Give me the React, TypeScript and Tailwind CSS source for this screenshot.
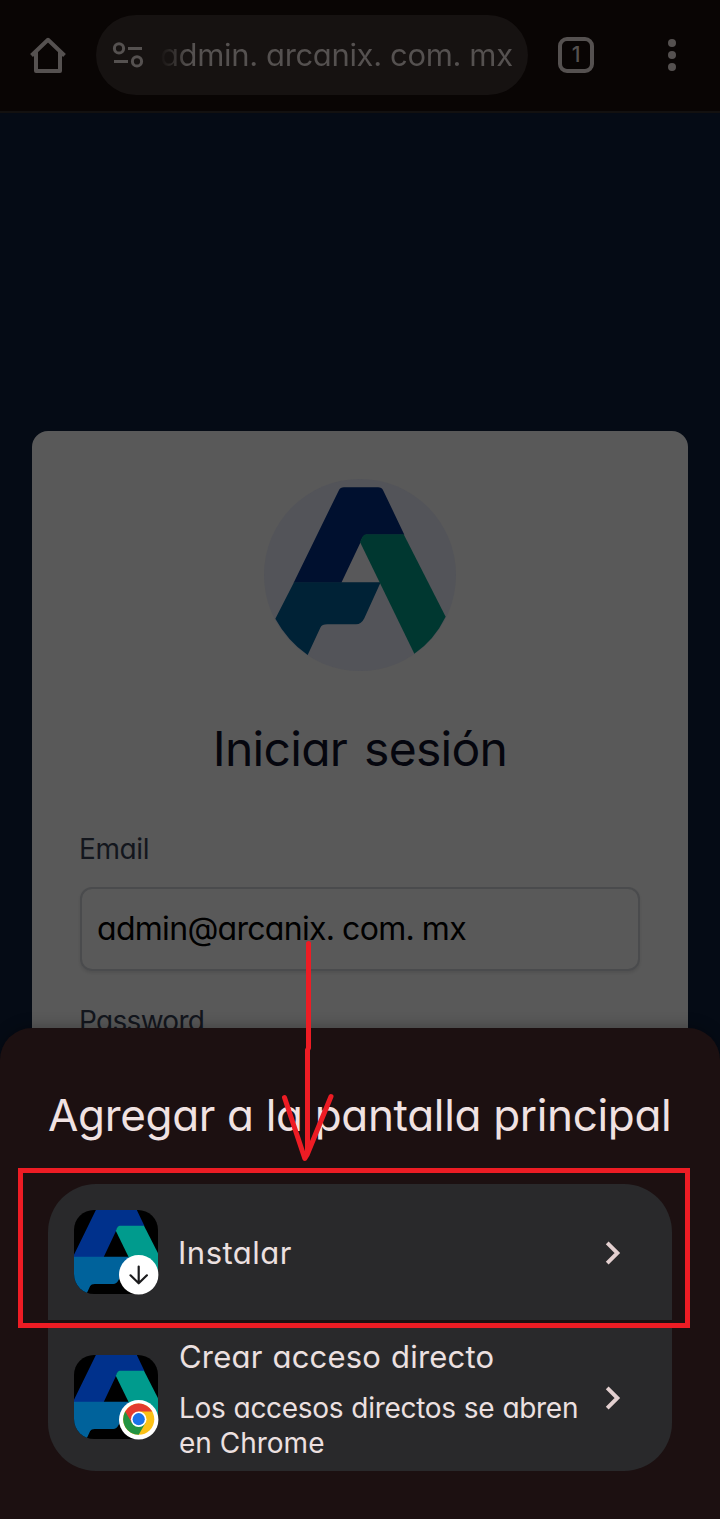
import type { ReactNode } from "react";

const LOGO = {
  navy: "M266 62 Q271 52 282 52 H384 Q395 52 400 62 L463 194 H348 Q337 197 331 218 L274 338 H131 Z",
  teal: "M132 337 H392 L343 445 Q334 463 318 463 H232 Q216 463 211 473 L173 555 Q112 512 76 446 Z",
  green: "M348 193 H461 L587 440 Q553 510 493 551 L330 216 L337 201 Q341 193 348 193 Z",
};

function LoginLogo() {
  return (
    <svg className="size-48" viewBox="42 27 576 576" aria-hidden="true">
      <circle cx="330" cy="315" r="288" fill="#535459" />
      <path d="M331 215 L274 338 H392 Z" fill="#58585a" />
      <path d={LOGO.navy} fill="#00102f" />
      <path d={LOGO.teal} fill="#002236" />
      <path d={LOGO.green} fill="#003730" />
    </svg>
  );
}

function AppIcon({ children }: { children: ReactNode }) {
  return (
    <div className="relative size-[84px] shrink-0">
      <svg className="size-[84px] rounded-[20px] bg-black" viewBox="136 120 390 390" aria-hidden="true">
        <path d={LOGO.navy} fill="#00318c" />
        <path d={LOGO.teal} fill="#00629b" />
        <path d={LOGO.green} fill="#009b8d" />
      </svg>
      <svg className="absolute top-[45px] left-[45px] size-10" viewBox="0 0 40 40" fill="none" aria-hidden="true">
        <circle cx="19.7" cy="19.7" r="19.7" fill="#fff" />
        {children}
      </svg>
    </div>
  );
}

function DownloadBadge() {
  return (
    <path
      d="M19.7 11.5 V28 M11.5 20.3 L19.7 28.3 L27.9 20.3"
      stroke="#1b1b1d"
      strokeWidth="2.2"
      strokeLinecap="round"
      strokeLinejoin="round"
    />
  );
}

function ChromeBadge() {
  return (
    <g transform="translate(19.7 19.2)">
      <circle r="15.6" fill="#fbc116" />
      <path d="M-13.5 -7.8 A15.6 15.6 0 0 0 0 15.6 L6.75 3.9 L0 0 Z" fill="#229342" />
      <path d="M-13.5 -7.8 A15.6 15.6 0 0 1 13.5 -7.8 H0 L-6.75 3.9 Z" fill="#e33b2e" />
      <circle r="7.8" fill="#fff" />
      <circle r="6.1" fill="#1a73e8" />
    </g>
  );
}

function Chevron() {
  return (
    <svg className="mt-px h-6 w-4 shrink-0" viewBox="0 0 16 24" fill="none" aria-hidden="true">
      <path d="M2.2 1.8 L12.4 12 L2.2 22.2" stroke="#e3d0d0" strokeWidth="3.9" />
    </svg>
  );
}

function BrowserBar() {
  return (
    <header className="flex h-[113px] shrink-0 border-b-2 border-[#131110] bg-[#090504] pt-[15px] text-[#555150]">
      <div className="flex h-20 w-24 shrink-0 items-center justify-center">
        <svg className="size-9" viewBox="0 0 36 36" fill="none" stroke="currentColor" strokeWidth="4" aria-hidden="true">
          <path d="M1.5 18.5 L18 2.8 L34.5 18.5" strokeLinejoin="round" />
          <path d="M6 15 V34 H30 V15" strokeLinejoin="round" />
        </svg>
      </div>
      <div className="flex h-20 w-[432px] shrink-0 items-center rounded-full bg-[#161211] pl-4">
        <svg className="h-[30px] w-8 shrink-0" viewBox="0 0 32 30" fill="none" stroke="currentColor" strokeWidth="3" aria-hidden="true">
          <circle cx="7" cy="8.4" r="4.6" />
          <path d="M16 8.5 H30 M2 21.5 H16" />
          <circle cx="25" cy="21.4" r="4.6" />
        </svg>
        <span className="ml-4 bg-linear-to-r from-[#161211] from-0% to-[#555150] to-[28px] bg-clip-text text-[31px] leading-10 tracking-[-0.36px] whitespace-pre text-transparent">
          admin. arcanix. com. mx
        </span>
      </div>
      <div className="flex h-20 w-24 shrink-0 items-center justify-center">
        <div className="flex size-9 items-center justify-center rounded-[9px] border-4 border-current pb-[2px] text-[21px] leading-none font-medium">1</div>
      </div>
      <div className="flex h-20 w-24 shrink-0 flex-col items-center justify-center gap-1">
        <i className="size-2 rounded-full bg-current" />
        <i className="size-2 rounded-full bg-current" />
        <i className="size-2 rounded-full bg-current" />
      </div>
    </header>
  );
}

function LoginCard() {
  return (
    <section className="flex h-[640px] w-[656px] flex-col rounded-t-2xl bg-[#595959] px-12 pt-12">
      <div className="flex justify-center">
        <LoginLogo />
      </div>
      <h1 className="mt-12 text-center text-[48px] leading-[60px] tracking-[-0.7px] whitespace-nowrap text-[#05060e] [word-spacing:4px]">
        Iniciar sesión
      </h1>
      <label className="mt-[50px] -ml-px text-[28px] leading-10 tracking-[-0.4px] text-[#13161d]">Email</label>
      <div className="mt-[18px] flex h-[84px] shrink-0 items-center rounded-xl border-2 border-[#4a4b4d] px-[15px] pb-px text-[32px] tracking-[-0.7px] whitespace-pre text-black shadow-[0_2px_3px_#00000018] [word-spacing:-0.5px]">
        admin@arcanix. com. mx
      </div>
      <label className="mt-[30px] -ml-px text-[28px] leading-10 tracking-[-0.7px] text-[#13161d]">Password</label>
    </section>
  );
}

function InstallSheet() {
  return (
    <section className="z-10 -mt-8 flex h-[491px] shrink-0 flex-col rounded-t-[32px] bg-[#1c1011] px-12 text-[#ece0e0] shadow-[0_-2px_14px_#00000040]">
      <h2 className="mt-[57px] h-[60px] text-[44px] leading-[60px] tracking-[-0.33px] whitespace-nowrap text-[#f0e2e2]">
        Agregar a la pantalla principal
      </h2>
      <div className="mt-[39px] flex h-[136px] shrink-0 items-center rounded-t-[48px] bg-[#29292b] pl-[26px]">
        <AppIcon>
          <DownloadBadge />
        </AppIcon>
        <span className="ml-5 w-[427px] pt-[2px] text-[31px] tracking-[0.5px] whitespace-nowrap">Instalar</span>
        <Chevron />
      </div>
      <div className="mt-1 flex h-[147px] shrink-0 items-center rounded-b-[48px] bg-[#29292b] pb-px pl-[26px]">
        <AppIcon>
          <ChromeBadge />
        </AppIcon>
        <div className="ml-[21px] h-[130px] w-[426px] whitespace-nowrap">
          <p className="h-[59px] pt-[5px] text-[31px] leading-10 tracking-[0.2px] [word-spacing:1px]">Crear acceso directo</p>
          <p className="text-[28px] leading-[35px] tracking-[-0.3px] [word-spacing:0.5px]">Los accesos directos se abren</p>
          <p className="text-[28px] leading-[35px]">en Chrome</p>
        </div>
        <Chevron />
      </div>
    </section>
  );
}

export default function App() {
  return (
    <div className="relative flex h-[1519px] w-[720px] flex-col overflow-hidden bg-[#050b15] font-['Inter','Liberation_Sans',sans-serif] [font-feature-settings:'cv11']">
      <BrowserBar />
      <main className="flex h-[947px] shrink-0 justify-center overflow-hidden pt-[318px]">
        <LoginCard />
      </main>
      <InstallSheet />
      <div className="absolute top-[1168px] left-[18px] z-20 h-40 w-[672px] border-5 border-[#ed1c24]" />
      <svg
        className="absolute top-[936px] left-[276px] z-20 h-[230px] w-[64px]"
        viewBox="276 936 64 230"
        fill="none"
        stroke="#ed1c24"
        strokeWidth="5"
        strokeLinecap="round"
        strokeLinejoin="round"
        aria-hidden="true"
      >
        <path d="M308.5 943.5 V1048 L307.5 1050 V1152" />
        <path d="M284.5 1097.5 L304.8 1158.5 L307 1155 L331 1096.5" />
      </svg>
    </div>
  );
}
